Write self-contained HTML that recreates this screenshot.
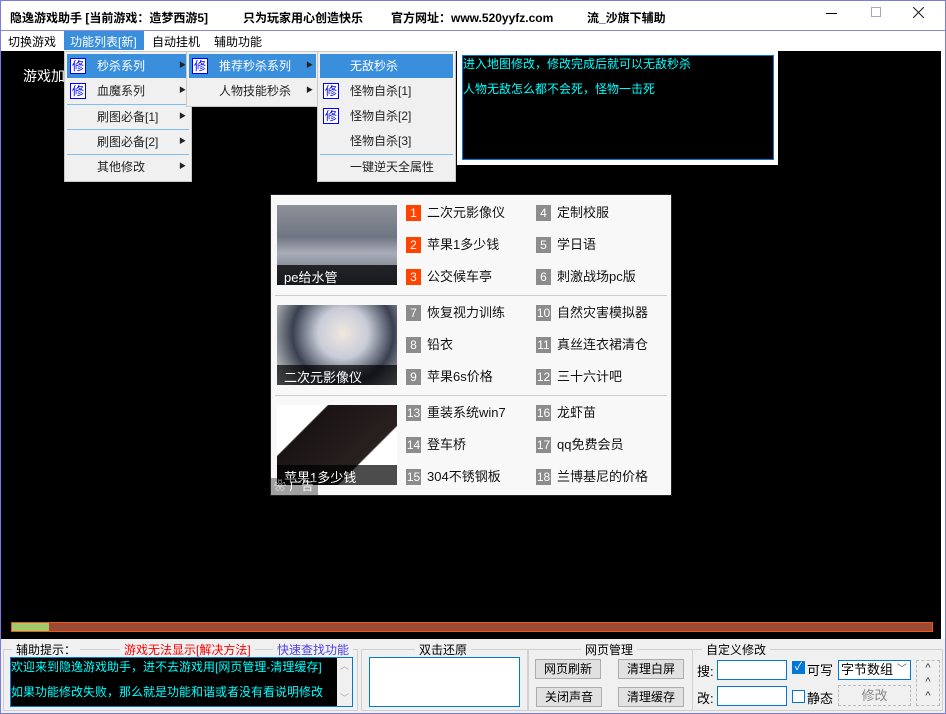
<!DOCTYPE html>
<html><head><meta charset="utf-8"><style>
*{margin:0;padding:0;box-sizing:border-box}
body{width:946px;height:714px;position:relative;overflow:hidden;background:#fff;font-family:"Liberation Sans","Noto Sans CJK SC",sans-serif;font-size:12px;color:#000}
.a{position:absolute;white-space:nowrap}
.mi{position:absolute;height:24px;line-height:24px;font-size:12px;color:#222}
.hl{background:#3a8fdc;color:#fff}
.ic{position:absolute;width:16px;height:16px;border:1px solid #00f;background:#fff;color:#00f;font-size:12px;line-height:14px;text-align:center;top:4px}
.ar{position:absolute;right:3px;top:0;font-size:7px;color:#222}
.sep{position:absolute;height:1px;background:#7fbfef}
.num{position:absolute;width:15px;height:16px;background:#8c8c8c;color:#fff;font-size:12px;line-height:16px;text-align:center}
.num.r{background:#ff4400}
.it{position:absolute;font-size:13px;line-height:16px;color:#111}
.btn{position:absolute;height:20px;border:1px solid #adadad;background:#e1e1e1;text-align:center;line-height:18px;font-size:12px}
.grp{position:absolute;border:1px solid #d0d0d0}
.gt{position:absolute;background:#f0f0f0;padding:0 4px;font-size:12px;line-height:14px}
.inp{position:absolute;border:1px solid #0078d7;background:#fff}
</style></head><body>
<div class="a" style="left:0;top:0;width:946px;height:714px;border:1px solid #7b7bd8"></div>
<div class="a" style="left:10px;top:9px;font-weight:bold;font-size:12px">隐逸游戏助手 [当前游戏：造梦西游5]</div>
<div class="a" style="left:243px;top:9px;font-weight:bold">只为玩家用心创造快乐</div>
<div class="a" style="left:391px;top:9px;font-weight:bold">官方网址：www.520yyfz.com</div>
<div class="a" style="left:587px;top:9px;font-weight:bold">流_沙旗下辅助</div>
<div class="a" style="left:826px;top:13px;width:11px;height:1px;background:#000"></div>
<div class="a" style="left:871px;top:7px;width:10px;height:10px;border:1px solid #aaa"></div>
<svg class="a" style="left:913px;top:7px" width="11" height="11"><path d="M0 0L11 11M11 0L0 11" stroke="#222" stroke-width="1.1"/></svg>
<div class="a" style="left:1px;top:30px;width:944px;height:1px;background:#8a8ad8"></div>
<div class="a" style="left:8px;top:33px;font-size:12px">切换游戏</div>
<div class="a" style="left:64px;top:31px;width:80px;height:19px;background:#3a8fdc"></div>
<div class="a" style="left:70px;top:33px;color:#fff">功能列表[新]</div>
<div class="a" style="left:152px;top:33px">自动挂机</div>
<div class="a" style="left:214px;top:33px">辅助功能</div>
<div class="a" style="left:1px;top:51px;width:940px;height:588px;background:#000"></div>
<div class="a" style="left:23px;top:66px;color:#fff;font-size:14px">游戏加</div>
<div class="a" style="left:11px;top:622px;width:922px;height:10px;background:#9b4b35;border:1px solid #f05a10"></div>
<div class="a" style="left:12px;top:623px;width:37px;height:8px;background:#9fcb6b"></div>
<div class="a" style="left:64px;top:51px;width:128px;height:131px;background:#f0f0f0;border:1px solid #c8c8c8"></div>
<div class="mi hl" style="left:67px;top:54px;width:122px"><div class="ic" style="left:3px">修</div><span style="position:absolute;left:30px">秒杀系列</span><span class="ar">▶</span></div>
<div class="mi" style="left:67px;top:79px;width:122px"><div class="ic" style="left:3px">修</div><span style="position:absolute;left:30px">血魔系列</span><span class="ar">▶</span></div>
<div class="sep" style="left:67px;top:104px;width:122px"></div>
<div class="mi" style="left:67px;top:105px;width:122px"><span style="position:absolute;left:30px">刷图必备[1]</span><span class="ar">▶</span></div>
<div class="sep" style="left:67px;top:129px;width:122px"></div>
<div class="mi" style="left:67px;top:130px;width:122px"><span style="position:absolute;left:30px">刷图必备[2]</span><span class="ar">▶</span></div>
<div class="sep" style="left:67px;top:154px;width:122px"></div>
<div class="mi" style="left:67px;top:155px;width:122px"><span style="position:absolute;left:30px">其他修改</span><span class="ar">▶</span></div>
<div class="a" style="left:186px;top:51px;width:132px;height:56px;background:#f0f0f0;border:1px solid #c8c8c8"></div>
<div class="mi hl" style="left:189px;top:54px;width:127px"><div class="ic" style="left:3px">修</div><span style="position:absolute;left:30px">推荐秒杀系列</span><span class="ar">▶</span></div>
<div class="mi" style="left:189px;top:79px;width:127px"><span style="position:absolute;left:30px">人物技能秒杀</span><span class="ar">▶</span></div>
<div class="a" style="left:317px;top:51px;width:139px;height:131px;background:#f0f0f0;border:1px solid #c8c8c8"></div>
<div class="mi hl" style="left:320px;top:54px;width:133px"><span style="position:absolute;left:30px">无敌秒杀</span></div>
<div class="mi" style="left:320px;top:79px;width:133px"><div class="ic" style="left:3px">修</div><span style="position:absolute;left:30px">怪物自杀[1]</span></div>
<div class="mi" style="left:320px;top:104px;width:133px"><div class="ic" style="left:3px">修</div><span style="position:absolute;left:30px">怪物自杀[2]</span></div>
<div class="mi" style="left:320px;top:129px;width:133px"><span style="position:absolute;left:30px">怪物自杀[3]</span></div>
<div class="sep" style="left:320px;top:154px;width:133px"></div>
<div class="mi" style="left:320px;top:155px;width:133px"><span style="position:absolute;left:30px">一键逆天全属性</span></div>
<div class="a" style="left:457px;top:51px;width:321px;height:114px;background:#fff"></div>
<div class="a" style="left:462px;top:55px;width:312px;height:105px;background:#000;border:1px solid #0078d7"></div>
<div class="a" style="left:463px;top:55px;color:#0ff">进入地图修改，修改完成后就可以无敌秒杀</div>
<div class="a" style="left:463px;top:80px;color:#0ff">人物无敌怎么都不会死，怪物一击死</div>
<div class="a" style="left:270px;top:194px;width:402px;height:302px;background:#f8f8f8;border:1px solid #222"></div>
<div class="a" style="left:277px;top:205px;width:120px;height:80px;background:linear-gradient(180deg,#8c9098 0%,#6f7582 40%,#a8adb8 60%,#5c6270 100%)"></div>
<div class="a" style="left:277px;top:265px;width:120px;height:20px;background:rgba(0,0,0,.75)"></div>
<div class="a" style="left:284px;top:267px;color:#fff;font-size:13px">pe给水管</div>
<div class="a" style="left:277px;top:305px;width:120px;height:80px;background:radial-gradient(circle at 55% 35%,#f0e8e0 0,#c8ccd8 30%,#3a4050 60%,#e8ece8 100%)"></div>
<div class="a" style="left:277px;top:365px;width:120px;height:20px;background:rgba(0,0,0,.7)"></div>
<div class="a" style="left:284px;top:367px;color:#fff;font-size:13px">二次元影像仪</div>
<div class="a" style="left:277px;top:405px;width:120px;height:80px;background:linear-gradient(135deg,#fff 0,#fff 25%,#1a1414 26%,#2a2020 70%,#fff 71%)"></div>
<div class="a" style="left:277px;top:465px;width:120px;height:20px;background:rgba(0,0,0,.7)"></div>
<div class="a" style="left:284px;top:467px;color:#fff;font-size:13px">苹果1多少钱</div>
<div class="a" style="left:271px;top:478px;width:47px;height:17px;background:rgba(0,0,0,.35);color:#fff;font-size:12px;line-height:17px;padding-left:3px">❀ 广告</div>
<div class="a" style="left:275px;top:295px;width:392px;height:1px;background:#ccc"></div>
<div class="a" style="left:275px;top:395px;width:392px;height:1px;background:#ccc"></div>
<div class="num r" style="left:406px;top:205px">1</div><div class="it" style="left:427px;top:205px">二次元影像仪</div>
<div class="num r" style="left:406px;top:237px">2</div><div class="it" style="left:427px;top:237px">苹果1多少钱</div>
<div class="num r" style="left:406px;top:269px">3</div><div class="it" style="left:427px;top:269px">公交候车亭</div>
<div class="num" style="left:536px;top:205px">4</div><div class="it" style="left:557px;top:205px">定制校服</div>
<div class="num" style="left:536px;top:237px">5</div><div class="it" style="left:557px;top:237px">学日语</div>
<div class="num" style="left:536px;top:269px">6</div><div class="it" style="left:557px;top:269px">刺激战场pc版</div>
<div class="num" style="left:406px;top:305px">7</div><div class="it" style="left:427px;top:305px">恢复视力训练</div>
<div class="num" style="left:406px;top:337px">8</div><div class="it" style="left:427px;top:337px">铅衣</div>
<div class="num" style="left:406px;top:369px">9</div><div class="it" style="left:427px;top:369px">苹果6s价格</div>
<div class="num" style="left:536px;top:305px">10</div><div class="it" style="left:557px;top:305px">自然灾害模拟器</div>
<div class="num" style="left:536px;top:337px">11</div><div class="it" style="left:557px;top:337px">真丝连衣裙清仓</div>
<div class="num" style="left:536px;top:369px">12</div><div class="it" style="left:557px;top:369px">三十六计吧</div>
<div class="num" style="left:406px;top:405px">13</div><div class="it" style="left:427px;top:405px">重装系统win7</div>
<div class="num" style="left:406px;top:437px">14</div><div class="it" style="left:427px;top:437px">登车桥</div>
<div class="num" style="left:406px;top:469px">15</div><div class="it" style="left:427px;top:469px">304不锈钢板</div>
<div class="num" style="left:536px;top:405px">16</div><div class="it" style="left:557px;top:405px">龙虾苗</div>
<div class="num" style="left:536px;top:437px">17</div><div class="it" style="left:557px;top:437px">qq免费会员</div>
<div class="num" style="left:536px;top:469px">18</div><div class="it" style="left:557px;top:469px">兰博基尼的价格</div>
<div class="a" style="left:1px;top:639px;width:944px;height:74px;background:#f0f0f0"></div>
<div class="grp" style="left:3px;top:649px;width:355px;height:62px"></div>
<div class="gt" style="left:12px;top:643px">辅助提示：</div>
<div class="gt" style="left:120px;top:643px;color:#f00">游戏无法显示[解决方法]</div>
<div class="gt" style="left:273px;top:643px;color:#5040e0">快速查找功能</div>
<div class="a" style="left:10px;top:657px;width:343px;height:50px;background:#000;border:1px solid #0078d7"></div>
<div class="a" style="left:337px;top:658px;width:15px;height:48px;background:#f0f0f0;color:#aaa;font-size:9px;text-align:center;line-height:16px">︿<br><br>﹀</div>
<div class="a" style="left:11px;top:658px;color:#0ff">欢迎来到隐逸游戏助手，进不去游戏用[网页管理-清理缓存]</div>
<div class="a" style="left:11px;top:683px;color:#0ff">如果功能修改失败，那么就是功能和谐或者没有看说明修改</div>
<div class="grp" style="left:361px;top:649px;width:167px;height:62px"></div>
<div class="gt" style="left:415px;top:643px">双击还原</div>
<div class="inp" style="left:369px;top:657px;width:151px;height:50px"></div>
<div class="grp" style="left:528px;top:649px;width:165px;height:62px"></div>
<div class="gt" style="left:581px;top:643px">网页管理</div>
<div class="btn" style="left:535px;top:659px;width:66px">网页刷新</div>
<div class="btn" style="left:618px;top:659px;width:66px">清理白屏</div>
<div class="btn" style="left:536px;top:687px;width:66px">关闭声音</div>
<div class="btn" style="left:618px;top:687px;width:66px">清理缓存</div>
<div class="grp" style="left:692px;top:649px;width:251px;height:62px"></div>
<div class="gt" style="left:702px;top:643px">自定义修改</div>
<div class="a" style="left:697px;top:661px;font-size:13px">搜:</div>
<div class="inp" style="left:717px;top:660px;width:70px;height:20px"></div>
<div class="a" style="left:697px;top:688px;font-size:13px">改:</div>
<div class="inp" style="left:717px;top:686px;width:70px;height:20px"></div>
<div class="a" style="left:792px;top:661px;width:13px;height:13px;background:#0078d7;color:#fff;font-size:11px;line-height:13px;text-align:center">✓</div>
<div class="a" style="left:807px;top:660px;font-size:13px">可写</div>
<div class="a" style="left:792px;top:690px;width:13px;height:13px;border:1px solid #0078d7;background:#fff"></div>
<div class="a" style="left:807px;top:688px;font-size:13px">静态</div>
<div class="a" style="left:838px;top:660px;width:73px;height:20px;background:#fff;border:1px solid #0078d7;font-size:13px;line-height:18px;padding-left:2px">字节数组<span style="position:absolute;right:3px;font-size:10px;color:#555">﹀</span></div>
<div class="a" style="left:838px;top:685px;width:73px;height:21px;border:1px dashed #bbb;text-align:center;line-height:19px;color:#888;font-size:13px">修改</div>
<div class="a" style="left:916px;top:660px;width:24px;height:46px;border:1px dashed #bbb;text-align:center;font-size:11px;line-height:14px;color:#333">^<br>^<br>^</div>
</body></html>
